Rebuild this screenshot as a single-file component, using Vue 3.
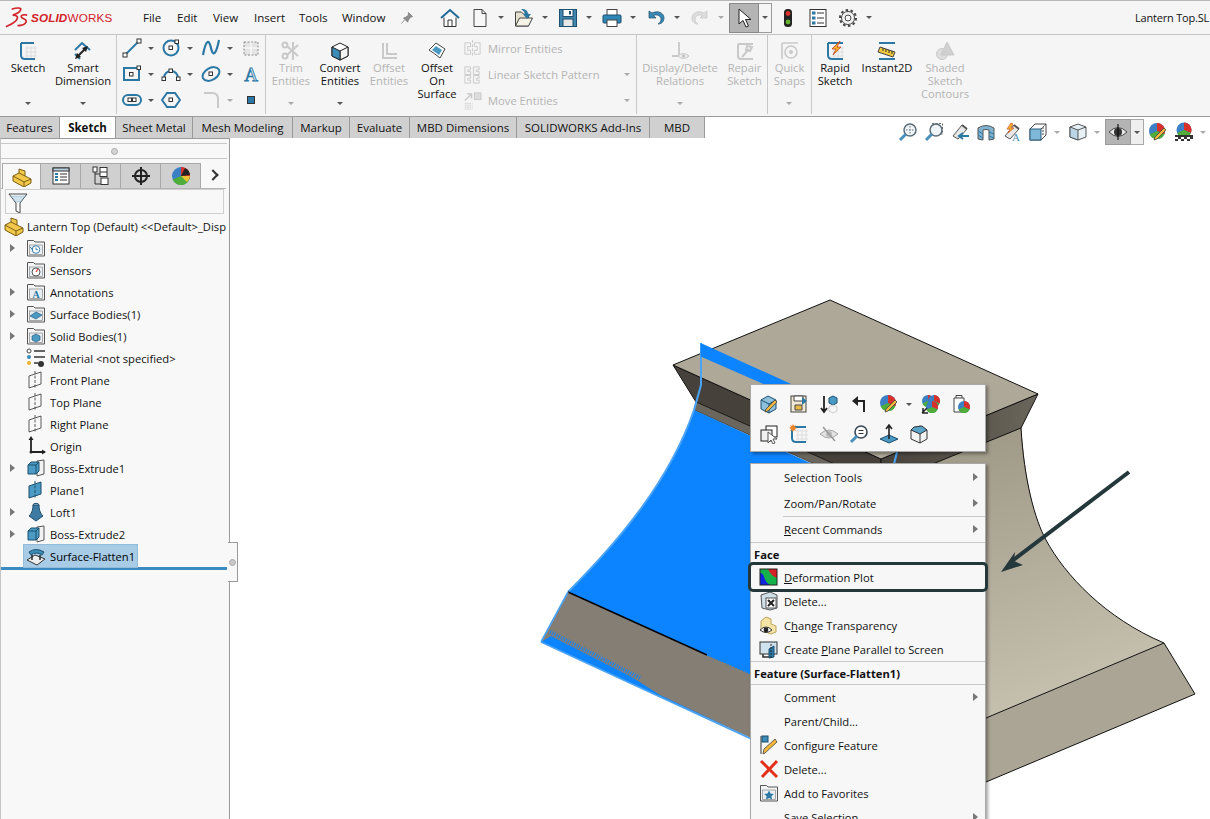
<template>
  <div class="app">
    <!-- title bar -->
    <header class="topbar">
      <div class="logo">
        <svg class="logo-mark" viewBox="0 0 26 22"><path d="M7 2C12 0 18 0 16 3 15 6 11 7 8 8 13 8 14 10 12 13 10 16 5 18 1 20" fill="none" stroke="#d3222a" stroke-width="1.7"/><path d="M23 8c-3-1-7 0-6 2 1 2 6 2 5 5-1 3-5 4-9 4" fill="none" stroke="#d3222a" stroke-width="1.7"/></svg>
        <span class="logo-text"><b>SOLID</b>WORKS</span>
      </div>
      <nav class="menus">
        <span v-for="m in menus" :key="m">{{ m }}</span>
      </nav>
      <svg class="ico pin" viewBox="0 0 20 20" v-html="icons.pin"></svg>
      <div class="quick">
        <template v-for="q in quick" :key="q.i">
          <span v-if="q.select" class="select-btn"><svg class="ico" viewBox="0 0 20 20" v-html="icons[q.i]"></svg></span>
          <span v-else class="q-slot" :class="{ solo: !q.caret }"><svg class="ico" viewBox="0 0 20 20" v-html="icons[q.i]"></svg></span>
          <span v-if="q.caret" class="q-caret" :class="{ boxed: q.select }"><i class="caret" :class="{ off: q.off }"></i></span>
        </template>
      </div>
      <div class="doc-title">Lantern Top.SL</div>
    </header>

    <!-- command manager -->
    <section class="ribbon">
      <div v-for="g in groups" :key="g.cls" class="group" :class="g.cls">
        <div v-if="g.tools" class="tool-grid">
          <div v-for="t in g.tools" :key="t.i" class="tool-cell">
            <svg class="ico wide" viewBox="0 0 20 20" v-html="icons[t.i]"></svg>
            <i v-if="t.caret" class="caret" :class="{ off: t.off }"></i>
          </div>
        </div>
        <div v-for="b in g.btns" :key="b.i" class="r-btn" :class="{ off: b.off }" :style="{ width: b.w + 'px' }">
          <svg class="ico" viewBox="0 0 20 20" v-html="icons[b.i]"></svg>
          <div v-for="l in b.label" :key="l">{{ l }}</div>
          <i v-if="b.caret" class="caret r-caret" :class="{ off: b.off }"></i>
        </div>
        <div v-if="g.stack" class="stack">
          <div v-for="s in g.stack" :key="s.label" class="stack-row">
            <svg class="ico small" viewBox="0 0 20 20" v-html="icons[s.i]"></svg>
            <span>{{ s.label }}</span>
            <i v-if="s.caret" class="caret off"></i>
          </div>
        </div>
      </div>
    </section>

    <div class="tabs">
      <span v-for="t in tabs" :key="t.label" class="tab" :class="{ active: t.active }" :style="{ width: t.w + 'px' }">{{ t.label }}</span>
    </div>

    <div class="main">
      <aside class="side">
        <div class="grip"><i></i></div>
        <div class="side-tabs">
          <span v-for="(t, n) in sideTabs" :key="t" class="side-tab" :class="{ active: n === 0 }">
            <svg class="ico" viewBox="0 0 20 20" v-html="icons[t]"></svg>
          </span>
          <span class="side-more"></span>
        </div>
        <div class="filter"><svg class="ico" viewBox="0 0 20 20" v-html="icons.funnel"></svg></div>
        <div class="tree-root">
          <svg class="ico" viewBox="0 0 20 20" v-html="icons.part"></svg>
          <span class="root-label">Lantern Top (Default) &lt;&lt;Default&gt;_Disp</span>
        </div>
        <div v-for="r in tree" :key="r.label" class="tree-row">
          <span class="twist"><i v-if="r.open" class="tri"></i></span>
          <span class="tree-cell" :class="{ sel: r.sel }">
            <svg class="ico" viewBox="0 0 20 20" v-html="icons[r.i]"></svg>
            <span>{{ r.label }}</span>
          </span>
        </div>
        <div class="rollback"></div>
        <div class="sash"><i></i></div>
      </aside>

      <main class="viewport">
        <svg class="model" viewBox="230 138 980 681">
          <defs>
            <linearGradient id="body" x1="0" y1="0" x2="0.3" y2="1">
              <stop offset="0" stop-color="#98917f" />
              <stop offset="0.55" stop-color="#b4ae9d" />
              <stop offset="1" stop-color="#cbc5b4" />
            </linearGradient>
            <linearGradient id="neck" x1="0" y1="0" x2="1" y2="0">
              <stop offset="0" stop-color="#46423b" />
              <stop offset="1" stop-color="#6a665b" />
            </linearGradient>
          </defs>
          <!-- right body and lower flange -->
          <path d="M881 470 1021 420C1024 480 1035 520 1046 540 1065 575 1105 618 1164 643L986 718 850 780Z" fill="url(#body)" />
          <path d="M1021 428C1024 480 1035 520 1046 540 1065 575 1105 618 1164 643" fill="none" stroke="#111" stroke-width="1" />
          <path d="M1164 643 1195 694 986 782 880 830V770L986 718Z" fill="#aba596" stroke="#111" stroke-width="1" />
          <!-- top block -->
          <path d="M673 365 881 459 881 485 696 402Z" fill="#46423b" stroke="#111" />
          <path d="M1038 394 881 459 881 485 1021 428Z" fill="url(#neck)" stroke="#111" />
          <path d="M696 402 881 485 881 494 694 410Z" fill="#6c675e" stroke="#111" stroke-width="0.6" />
          <path d="M830 300 1038 394 881 459 673 365Z" fill="#aea898" stroke="#111" />
          <!-- selected face -->
          <path d="M694 410 830 472 900 472 790 720 568 592C620 540 670 480 694 410Z" fill="#0d84ff" />
          <path d="M568 592C620 540 670 480 694 410L701 385V343" fill="none" stroke="#4aa3f5" stroke-width="2" />
          <path d="M700.7 343 800 388 800 400 700.7 356.5Z" fill="#0d84ff" />
          <path d="M897 452 894 464" stroke="#4aa3f5" stroke-width="2" />
          <!-- lower left flange -->
          <path d="M568 592 707 655 760 678 760 742 541 642Z" fill="#847e74" />
          <path d="M568 592 707 655" stroke="#000" stroke-width="1.5" />
          <path d="M707 655 760 678" stroke="#0d84ff" stroke-width="1.5" stroke-dasharray="1.5 1.5" />
          <path d="M541 642 551 636 630 676 660 695 760 742Z" fill="#0d84ff" />
          <path d="M550 632 640 678" fill="none" stroke="#0d84ff" stroke-width="4" stroke-dasharray="1 1.5" />
          <path d="M541 642 568 592M541 642 760 743" fill="none" stroke="#4aa3f5" stroke-width="1.6" />
          <!-- callout arrow -->
          <path d="M1129 472 1012 561" stroke="#24383c" stroke-width="4" />
          <path d="M1001 572 1015 552 1014 561 1023 565Z" fill="#24383c" />
        </svg>

        <div class="mini">
          <div v-for="(row, n) in miniBar" :key="n" class="mini-row">
            <template v-for="m in row" :key="m">
              <i v-if="m === 'caret'" class="caret mini-caret"></i>
              <span v-else class="mini-btn"><svg class="ico" viewBox="0 0 20 20" v-html="icons[m]"></svg></span>
            </template>
          </div>
        </div>

        <div class="ctx">
          <template v-for="(it, n) in ctxItems" :key="n">
            <div v-if="it.sep" class="ctx-sep"></div>
            <div v-else-if="it.head" class="ctx-head">{{ it.head }}</div>
            <div v-else class="ctx-row" :class="{ tall: it.tall, inset: it.inset, hl: it.hl }">
              <svg v-if="it.i" class="ico" viewBox="0 0 20 20" v-html="icons[it.i]"></svg>
              <span v-else></span>
              <span>{{ it.a }}<u v-if="it.u">{{ it.u }}</u>{{ it.b }}</span>
              <i v-if="it.sub" class="tri"></i>
            </div>
          </template>
        </div>
      </main>
    </div>

    <div class="viewbar">
      <template v-for="v in viewBar" :key="v.i">
        <span class="v-slot" :class="{ on: v.on }"><svg class="ico" viewBox="0 0 20 20" v-html="icons[v.i]"></svg></span>
        <span v-if="v.caret" class="v-caret" :class="{ boxed: v.on }"><i class="caret" :class="{ off: !v.on }"></i></span>
      </template>
    </div>
  </div>
</template>

<script setup>
const BL = '#2b78a5'
const DK = '#333'
const OFF = '#c9c9c9'

const sq = (x, y, s = 4) => `<rect x="${x}" y="${y}" width="${s}" height="${s}" fill="#fff" stroke="${DK}"/>`
const ball = (x, y, r) => `<g transform="translate(${x} ${y}) scale(${r / 10})"><circle r="10" fill="#3b7fc4"/><path d="M0 0V-10A10 10 0 0 1 9.2 4Z" fill="#d8312a"/><path d="M0 0L9.2 4A10 10 0 0 1-9.2 4Z" fill="#4fae3a"/></g>`
const pencil = '<path d="M9 17 18 8l-2-2-9 9-1 3Z" fill="#f3b73c" stroke="#444" stroke-width=".8"/>'
const folder = inner => `<path d="M1.5 4V2.5h6L9 4h9.5v14h-17Z" fill="#f4f4f4" stroke="#555"/><rect x="3.5" y="7" width="13" height="9.5" fill="#e9eef2" stroke="#777" stroke-width=".6"/>${inner}`
const plane = '<path d="M3 6 15 2V14L3 18Z" fill="none" stroke="#333" stroke-width=".8"/><path d="M9 1V19" stroke="#333" stroke-width=".8" stroke-dasharray="3 1.5"/>'
const block = '<path d="M11 3 18 2V16L11 18Z" fill="#f2f2f2" stroke="#555"/><path d="M2 7l3-3h8v9l-3 3H2Z" fill="#4a9ac4" stroke="#1d4f6e"/><path d="M2 7h8v9M10 7l3-3" fill="none" stroke="#1d4f6e"/>'
const yellowPart = '<path d="M1 9 7 6V2l6 2v5l6 3v4l-7 4L1 14Z" fill="#f2c84b" stroke="#7a5f12"/><path d="M1 9l11 6 7-3M12 15v5M7 6l6 3" fill="none" stroke="#7a5f12"/>'
const flash = '<path d="M3 14 12 3l5 4-9 10Z" fill="#e8e8e8" stroke="#555"/><path d="M12 3l5 4" stroke="#555" stroke-width="2"/>'
const glass = '<circle cx="12" cy="8" r="6" fill="#eef4f8" stroke="#5a6b78" stroke-width="1.5"/><path d="M8 12 2 18" stroke="#4a90b8" stroke-width="3"/>'

const icons = {
  pin: '<path d="M12 2l6 6-3 1-3 4-1 3-6-6 3-1 4-3ZM7 12l-5 6" fill="#8e8e8e" stroke="#777"/>',
  home: `<path d="M1 10 10 2l9 8" fill="none" stroke="#1f6a96" stroke-width="2"/><path d="M4 9.5V18.5H16V9.5" fill="#fff" stroke="${DK}"/><path d="M8 18.5V12H12V18.5" fill="none" stroke="${DK}"/>`,
  doc: `<path d="M4 1.5h8l4 4v13H4Z" fill="#f7f7f7" stroke="#444"/><path d="M12 1.5v4h4" fill="none" stroke="#444"/>`,
  open: `<path d="M1.5 4h6l2 2h5v12h-13Z" fill="#e6e1cf" stroke="#444"/><path d="M1.5 18l4-8h13l-4 8Z" fill="#f5f2e6" stroke="#444"/><path d="M7 1c5 0 7 2 7 5h3l-4 5-4-5h2c0-2-2-3-4-5Z" fill="${BL}"/>`,
  save: `<rect x="1.5" y="1.5" width="17" height="17" fill="#3f87ad" stroke="#1d4f6e"/><rect x="5" y="1.5" width="10" height="7" fill="#fff" stroke="#1d4f6e"/><rect x="5" y="11" width="10" height="7.5" fill="#e8e8e8" stroke="#1d4f6e"/><rect x="11" y="3" width="2" height="3.5" fill="#1d4f6e"/>`,
  print: `<rect x="5" y="1.5" width="10" height="6" fill="#fff" stroke="#444"/><rect x="1" y="7" width="18" height="8" rx="1" fill="#2f86b5" stroke="#1d4f6e"/><rect x="5" y="12" width="10" height="6.5" fill="#fff" stroke="#444"/>`,
  undo: `<path d="M3 3V10H10L7.5 7.5C11 6 15 8 15 11c0 2-1 4-3 5 4 0 6-3 6-6 0-5-6-8-12-5Z" fill="#3a88b4" stroke="#1d4f6e" stroke-width=".7"/>`,
  redo: `<path d="M17 3V10H10L12.5 7.5C9 6 5 8 5 11c0 2 1 4 3 5-4 0-6-3-6-6 0-5 6-8 12-5Z" fill="#ddd" stroke="#c4c4c4" stroke-width=".7"/>`,
  arrow: '<path d="M5 1V16L9 12.5 12 19 14.5 18 11.5 11.5H17Z" fill="#fff" stroke="#222"/>',
  traffic: '<rect x="6" y="1" width="8" height="18" rx="3.5" fill="#222"/><circle cx="10" cy="5.5" r="2.4" fill="#d8322a"/><circle cx="10" cy="14" r="2.4" fill="#65b32e"/>',
  options: `<rect x="2" y="1.5" width="16" height="17" fill="#fff" stroke="${DK}"/><path d="M9 5h7M9 10h7M9 15h7" stroke="${DK}"/><rect x="4" y="3.5" width="3.5" height="3" fill="${BL}"/><rect x="4" y="8.5" width="3.5" height="3" fill="${BL}"/><rect x="4" y="13.5" width="3.5" height="3" fill="${BL}"/>`,
  gear: `<circle cx="10" cy="10" r="3" fill="none" stroke="#444"/><circle cx="10" cy="10" r="6.5" fill="none" stroke="#444"/><circle cx="10" cy="10" r="8" fill="none" stroke="#444" stroke-width="2" stroke-dasharray="2.6 2.4"/>`,

  sketch: `<path d="M7 7h12M7 11h12M7 15h12M9 5v13M13 5v13M17 5v13" stroke="#ddd"/><path d="M3 2H16M3 2V14Q3 18 7 18H17" fill="none" stroke="${BL}" stroke-width="2"/>`,
  smart: `<path d="M2 9 9 2l8 7M2 13l5 5" fill="none" stroke="${BL}" stroke-width="2"/><path d="M4 16 13 7" stroke="#222" stroke-width="2"/><path d="M2 18l2-6 4 4ZM15 5l-6 2 4 4Z" fill="#222"/>`,
  line: `<path d="M3 17 17 3" stroke="${BL}" stroke-width="1.8"/>${sq(1, 15)}${sq(15, 1)}`,
  circle: `<circle cx="10" cy="10" r="7.5" fill="none" stroke="${BL}" stroke-width="2"/>${sq(8, 8, 3.5)}${sq(14, 2, 3.5)}`,
  spline: `<path d="M2 17C5 1 8 1 10 10s5 7 8-8" fill="none" stroke="${BL}" stroke-width="2.2"/>`,
  pattern: `<rect x="3" y="4" width="14" height="13" fill="#e4e4e4" stroke="#888" stroke-dasharray="2 1.5"/><path d="M3 10h14M10 4v13" stroke="#fff"/>`,
  rect: `<rect x="2" y="4" width="15" height="12" fill="none" stroke="${BL}" stroke-width="2"/>${sq(7.5, 8.5, 3.5)}${sq(15, 2, 3.5)}`,
  arc: `<path d="M3 14a7 7 0 0 1 14 0" fill="none" stroke="${BL}" stroke-width="2"/>${sq(1, 13, 3.5)}${sq(8, 5, 3.5)}${sq(15.5, 13, 3.5)}`,
  ellipse: `<ellipse cx="10" cy="10" rx="9" ry="6" transform="rotate(-30 10 10)" fill="none" stroke="${BL}" stroke-width="2"/>${sq(8, 8, 3.5)}`,
  textA: `<text x="10" y="17" font-size="19" font-family="Liberation Serif" text-anchor="middle" fill="#fff" stroke="${BL}" stroke-width=".9">A</text>`,
  slot: `<rect x="1" y="5" width="18" height="10" rx="5" fill="none" stroke="${BL}" stroke-width="2"/>${sq(6, 8, 3.5)}${sq(10.5, 8, 3.5)}`,
  hexa: `<path d="M6 3h8l5 7-5 7H6l-5-7Z" fill="none" stroke="${BL}" stroke-width="2"/>${sq(8, 8, 3.5)}`,
  fillet: `<path d="M3 3h8q6 0 6 6v9" fill="none" stroke="${OFF}" stroke-width="2"/>`,
  point: `<rect x="6.5" y="6.5" width="7" height="7" fill="${BL}" stroke="${DK}"/>`,
  trim: `<circle cx="4" cy="4" r="2.5" fill="none" stroke="${OFF}" stroke-width="2"/><circle cx="4" cy="15" r="2.5" fill="none" stroke="${OFF}" stroke-width="2"/><path d="M6 5 17 15M6 14 17 4M12 1V19" stroke="${OFF}" stroke-width="2"/>`,
  convert: `<path d="M2 6 10 2l8 4v9l-8 4-8-4Z" fill="#fff" stroke="#222"/><path d="M10 10v9l8-4V6Z" fill="#f3f3f3" stroke="#222"/><path d="M2 6l8 4v9l-8-4Z" fill="#3d8cb8" stroke="#222"/>`,
  offset: `<path d="M4 2V17H18M8 2V13H18" fill="none" stroke="${OFF}" stroke-width="2"/>`,
  offsetSurf: `<path d="M2 9 9 2l9 6-5 9Q7 12 2 9Z" fill="#fff" stroke="#444"/><path d="M5 9 9 5l6 4-3 5Q8 11 5 9Z" fill="#4a9ac4"/>`,
  mirror: `<path d="M10 1V19" stroke="${OFF}" stroke-dasharray="3 1.5"/><path d="M8 4H2V16H8V12H5V8H8ZM12 4h6V16H12V12h3V8H12Z" fill="none" stroke="${OFF}"/>`,
  linear: `<path d="M2 2h6v3h-3v2h3v3H2ZM11 2h6v3h-3v2h3v3H11ZM2 11h6v3h-3v2h3v3H2ZM11 11h6v3h-3v2h3v3H11Z" fill="none" stroke="${OFF}"/>`,
  move: `<path d="M2 10 8 4M4 3h5v5" fill="none" stroke="${OFF}" stroke-width="1.5"/><rect x="12" y="2" width="7" height="7" fill="#ddd" stroke="${OFF}"/><path d="M2 13h8M2 15h8M2 17h8M2 19h8" stroke="${OFF}" stroke-dasharray="1.5 1"/>`,
  relations: `<path d="M9 1V14M2 15H16" stroke="${OFF}" stroke-width="1.8"/><path d="M8 15q5-5 11 0q-6 5-11 0Z" fill="#eee" stroke="${OFF}"/><circle cx="13.5" cy="15" r="1.8" fill="${OFF}"/>`,
  repair: `<path d="M3 3H18M3 3V15Q3 18 6 18H18" fill="none" stroke="${OFF}" stroke-width="2"/><path d="M7 16 14 8M12 5l5 1-2 4-4-1Z" stroke="${OFF}" stroke-width="2" fill="none"/>`,
  snaps: `<path d="M2 2H18M2 2V18" stroke="${OFF}" stroke-width="1.6"/><circle cx="11" cy="11" r="6" fill="none" stroke="${OFF}" stroke-width="1.6"/><circle cx="11" cy="11" r="2" fill="${OFF}"/>`,
  rapid: `<path d="M7 7h12M7 11h12M7 15h12M9 5v13M13 5v13M17 5v13" stroke="#ddd"/><path d="M3 2H18M3 2V14Q3 18 7 18H18" fill="none" stroke="${BL}" stroke-width="2"/><path d="M15 0 7 8h4l-3 6 8-8h-4Z" fill="#f0b32b" stroke="#c8431c" stroke-width=".8"/>`,
  instant: `<path d="M2 2H18M2 18H18" stroke="${BL}" stroke-width="2"/><path d="M3 6 18 11 16 16 1 11Z" fill="#efc83c" stroke="#444"/><path d="M6 7v3M9 8v3M12 9v3M15 10v3" stroke="#333"/>`,
  shaded: `<circle cx="7" cy="13" r="5.5" fill="#ddd" stroke="${OFF}"/><path d="M12 1 19 14H6Z" fill="#d0d0d0" stroke="${OFF}"/>`,

  zoomfit: `${glass}<path d="M12 4v8M8 8h8" stroke="#5a6b78" stroke-width=".9" stroke-dasharray="1.5 1.5"/>`,
  zoomarea: `<rect x="8" y="1.5" width="10.5" height="10.5" fill="none" stroke="#666" stroke-dasharray="2 1.5"/>${glass}`,
  prevview: `${flash}<path d="M19 14H10M13 11l-4 3 4 3" fill="none" stroke="${BL}" stroke-width="2"/>`,
  section: `<path d="M2 6q8-5 16 0v11l-5 1V8q-3-1-6 0v10l-5-1Z" fill="#7eb2d0" stroke="#555"/><path d="M2 9l5 3M2 13l5 3M13 10l5 2M13 14l5 2" stroke="#2b78a5"/>`,
  dynamic: `${flash}<path d="M9 1 5 7h3L6 11l6-5H9l2-4Z" fill="#f0b32b" stroke="#c8431c" stroke-width=".6"/><text x="14" y="19" font-size="11" font-family="Liberation Serif" fill="#4a8fb8" text-anchor="middle">A</text>`,
  cubeview: `<path d="M2 7 7 2H18V13L13 18H2Z" fill="#fff" stroke="#444"/><rect x="2" y="7" width="11" height="11" fill="#7fb8d8" stroke="#2b5f80"/><path d="M13 7l5-5M15 5v8" stroke="#444" stroke-dasharray="2 1"/>`,
  display: `<path d="M10 2 18 5V15L10 18 2 15V5Z" fill="#e8f1f6" stroke="#555"/><path d="M2 5 10 8V18L2 15Z" fill="#b9d5e6" stroke="#555"/><path d="M10 8 18 5" stroke="#555"/>`,
  eye: '<path d="M1 10q9-9 18 0q-9 9-18 0Z" fill="#e8e8e8" stroke="#444"/><circle cx="10" cy="10" r="4" fill="#333"/><path d="M10 2V18" stroke="#111" stroke-width="1.2"/>',
  appear: `${ball(9, 9, 8)}${pencil}`,
  scene: `${ball(10, 8, 7.5)}<path d="M1 13h18v6H1Z" fill="#333"/><path d="M1 15h3v2H1ZM7 15h3v2H7ZM13 15h3v2h-3ZM4 17h3v2H4ZM10 17h3v2h-3ZM16 17h3v2h-3Z" fill="#fff"/>`,

  part: yellowPart,
  props: `<rect x="2" y="2" width="16" height="16" fill="#fff" stroke="${DK}"/><rect x="2" y="2" width="16" height="3" fill="#bcd4e2" stroke="${DK}"/><path d="M9 8h7M9 11h7M9 14h7" stroke="${DK}"/><rect x="4" y="7" width="3" height="2" fill="${BL}"/><rect x="4" y="10" width="3" height="2" fill="${BL}"/><rect x="4" y="13" width="3" height="2" fill="${BL}"/>`,
  config: `<path d="M4 4v14h6M4 8h6" stroke="${DK}" fill="none"/><rect x="2" y="1" width="4" height="5" fill="#fff" stroke="${DK}"/><rect x="9" y="1.5" width="7" height="9" fill="#fff" stroke="${DK}"/><path d="M9 6h7" stroke="${DK}"/><rect x="10" y="12" width="7" height="6.5" fill="#fff" stroke="${DK}"/>`,
  target: '<circle cx="10" cy="10" r="6" fill="none" stroke="#222" stroke-width="2"/><path d="M10 1V19M1 10H19" stroke="#222" stroke-width="2"/>',
  appearTab: `${ball(10, 10, 9)}<path d="M10 10 14 2A9 9 0 0 1 19 9Z" fill="#222"/><path d="M10 10 19 10A9 9 0 0 1 16 16Z" fill="#eac234"/>`,
  funnel: '<path d="M1 1H19L12 10V20L8 18V10Z" fill="#fff" stroke="#444"/><path d="M3 3H17L12 9H8Z" fill="#cfe2ee" stroke="#7aa6c2" stroke-width=".5"/>',
  fFolder: folder('<circle cx="10" cy="11.5" r="3.8" fill="#fff" stroke="#3d7fa8"/><path d="M10 9.5v2.2h2M4 9l3 3" stroke="#3d7fa8" fill="none"/>'),
  fSensor: folder('<circle cx="10" cy="12" r="4" fill="#fff" stroke="#555"/><path d="M10 12l2-3" stroke="#d8322a" stroke-width="1.3"/>'),
  fAnno: folder(`<text x="10" y="16" font-size="10" font-weight="700" font-family="Liberation Serif" text-anchor="middle" fill="#2b78a5">A</text>`),
  fSurf: folder('<path d="M4 12 10 8l6 3-6 4Z" fill="#4a9ac4" stroke="#1d4f6e" stroke-width=".6"/>'),
  fSolid: folder('<path d="M10 8l4 2v4l-4 2-4-2v-4Z" fill="#4a9ac4" stroke="#1d4f6e" stroke-width=".6"/>'),
  material: `<path d="M8 3H19M8 9H19" stroke="${DK}" stroke-width="1.5"/><circle cx="3" cy="3" r="2" fill="#fff" stroke="#444"/><circle cx="3" cy="9" r="2" fill="#3d8cb8"/><circle cx="3" cy="15" r="2" fill="#e8b22c"/><circle cx="15" cy="16" r="3" fill="#333"/><path d="M8 15h4" stroke="${DK}" stroke-width="1.5"/>`,
  plane,
  origin: '<path d="M5 2V16H19" fill="none" stroke="#222" stroke-width="1.8"/><path d="M5 0 2.5 4H7.5ZM20 16l-4-2.5v5Z" fill="#222"/><circle cx="5" cy="16" r="1.5" fill="#222"/>',
  extrude: block,
  planeF: '<path d="M3 6 15 2V14L3 18Z" fill="#4a9ac4" stroke="#1d4f6e"/><path d="M9 1V19" stroke="#1d4f6e" stroke-dasharray="3 1.5"/>',
  loft: '<ellipse cx="10" cy="3" rx="3" ry="1.6" fill="#d9e7ef" stroke="#1d4f6e"/><path d="M7 3C7 9 5 12 3 14L10 19l7-5C15 12 13 9 13 3Z" fill="#3e7ba3" stroke="#1d4f6e"/>',
  flatten: '<path d="M1 14 9 9l10 4-8 6Z" fill="#eee" stroke="#333"/><path d="M3 6Q10 1 18 6L16 9Q10 5 5 9Z" fill="#3d8cb8" stroke="#1d4f6e"/><path d="M6 9v5M14 9v5" stroke="#222" stroke-width="1.4"/>',

  editPart: `<path d="M2 6 9 2l8 4v9l-7 4-8-4Z" fill="#8ec0dc" stroke="#1d4f6e"/><path d="M2 6l8 4v9M10 10l7-4" fill="none" stroke="#1d4f6e"/><path d="M9 17 18 8l-2-2-9 9-1 3Z" fill="#f3b73c" stroke="#444" stroke-width=".8"/>`,
  editSketch: `<rect x="2" y="2" width="15" height="16" fill="#efe8d2" stroke="#444"/><path d="M5 2h9v5H5Z" fill="#fff" stroke="#444"/><path d="M6 11h7v5H6Z" fill="#e8b84a" stroke="#444"/><path d="M13 3l5 4-5 4Z" fill="${BL}"/>`,
  rollback: `<path d="M5 2V17M2 14l3 4 3-4" fill="none" stroke="#222" stroke-width="1.8"/><path d="M10 4l4-2 4 2v5l-4 2-4-2Z" fill="#4a9ac4" stroke="#1d4f6e"/><path d="M10 13l4-2 4 2v4l-4 2-4-2Z" fill="#f6f6f6" stroke="#ccc"/>`,
  parentUp: '<path d="M15 18V7H8" fill="none" stroke="#222" stroke-width="2"/><path d="M3 7l6-5v10Z" fill="#222"/>',
  copyApp: `${ball(7, 7, 6)}${ball(13, 7, 6)}${ball(11, 13, 6)}<path d="M1 19 6 14M2 14v5h5" fill="none" stroke="#222" stroke-width="1.5"/>`,
  docBall: `<path d="M3 4h10v14H3Z" fill="#fff" stroke="#444"/><path d="M5 4V1.5h6V4" fill="none" stroke="#444"/>${ball(13, 13, 6)}`,
  selOther: `<rect x="7" y="2" width="11" height="11" fill="#fff" stroke="#222"/><rect x="2" y="6" width="11" height="11" fill="#f0f0f0" stroke="#222"/><path d="M9 8V19L12 16 14 20 16 19 14 15H18Z" fill="#fff" stroke="#555"/>`,
  newSketch: `<path d="M7 7h12M7 11h12M7 15h12M9 5v13M13 5v13M17 5v13" stroke="#ddd"/><path d="M3 3V14Q3 18 7 18H17M3 3H17" fill="none" stroke="${BL}" stroke-width="2"/><path d="M4 0l1 2 2-1-1 2 2 1-2 1 1 2-2-1-1 2-1-2-2 1 1-2-2-1 2-1-1-2 2 1Z" fill="#e8832a"/>`,
  hide: '<path d="M1 10q9-8 18 0q-9 8-18 0Z" fill="#e2e2e2" stroke="#a8a8a8"/><circle cx="10" cy="10" r="3" fill="#bbb"/><path d="M4 3 16 17" stroke="#999" stroke-width="1.5"/>',
  zoomSel: `<circle cx="12" cy="8" r="6" fill="#fff" stroke="#3a4a55" stroke-width="1.6"/><path d="M9.5 6.5h5M9.5 9.5h5" stroke="#333"/><path d="M8 12 2 18" stroke="#4a90b8" stroke-width="3"/>`,
  normal: '<path d="M1 15 10 11l9 4-9 4Z" fill="#4a9ac4" stroke="#1d4f6e"/><path d="M10 15V2M7 5l3-4 3 4" fill="none" stroke="#222" stroke-width="1.6"/>',
  isoCube: '<path d="M2 6 11 2l7 4v9l-7 4-9-4Z" fill="#f3f3f3" stroke="#333"/><path d="M2 6l3-3 8-1 5 4-7 4Z" fill="#5aa3c9" stroke="#333"/><path d="M11 10v9" stroke="#333"/>',

  deform: '<rect x="1" y="2" width="17" height="16" fill="#16b14b"/><path d="M1 6Q4 6 5 10 7 16 11 18H1Z" fill="#1024e0"/><path d="M9 2H18V11Q12 9 9 2Z" fill="#d91f26"/><rect x="1" y="2" width="17" height="16" fill="none" stroke="#222"/>',
  delFace: '<path d="M2 4 11 1l7 3v13l-7 2-8-2Z" fill="#cfdfe8" stroke="#555"/><rect x="7" y="7" width="10" height="10" fill="#fff" stroke="#555"/><path d="M9 9l6 6M15 9l-6 6" stroke="#222" stroke-width="2"/>',
  transp: '<path d="M7 2l5 2v5l5 2v6l-5 2-5-2-5-3V6Z" fill="#f5e3a6" stroke="#bba45a"/><path d="M1 15q6-6 12 0q-6 5-12 0Z" fill="#fff" stroke="#333"/><circle cx="7" cy="15" r="2.4" fill="#222"/>',
  parallel: `<rect x="1" y="3" width="17" height="12" fill="#cfe3ef" stroke="#333"/><path d="M4 15v3h7" stroke="#333" fill="none" stroke-width="1.6"/><path d="M10 10 15 7V18L10 19Z" fill="${BL}" stroke="#1d4f6e"/><path d="M12 5V19" stroke="#222" stroke-dasharray="2 1"/>`,
  configure: `<path d="M2 1V19" stroke="#333"/><rect x="3" y="1" width="6" height="6" fill="#3d8cb8" stroke="#1d4f6e"/><path d="M6 18 18 7l-2-3L5 14l-1 5Z" fill="#f3b73c" stroke="#444" stroke-width=".8"/>`,
  redX: '<path d="M2 2 18 18M18 2 3 18" stroke="#e2301b" stroke-width="3"/>',
  fav: folder('<path d="M10 7.5l1.5 3 3.3.4-2.4 2.3.6 3.3-3-1.6-3 1.6.6-3.3-2.4-2.3 3.3-.4Z" fill="#2b78a5"/>')
}

const menus = ['File', 'Edit', 'View', 'Insert', 'Tools', 'Window']

const quick = [
  { i: 'home' },
  { i: 'doc', caret: true },
  { i: 'open', caret: true },
  { i: 'save', caret: true },
  { i: 'print', caret: true },
  { i: 'undo', caret: true },
  { i: 'redo', caret: true, off: true },
  { i: 'arrow', caret: true, select: true },
  { i: 'traffic' },
  { i: 'options' },
  { i: 'gear', caret: true }
]

const groups = [
  {
    cls: 'g1',
    btns: [
      { i: 'sketch', label: ['Sketch'], w: 56, caret: true },
      { i: 'smart', label: ['Smart', 'Dimension'], w: 54, caret: true }
    ]
  },
  {
    cls: 'g2',
    tools: [
      { i: 'line', caret: true }, { i: 'circle', caret: true }, { i: 'spline', caret: true }, { i: 'pattern' },
      { i: 'rect', caret: true }, { i: 'arc', caret: true }, { i: 'ellipse', caret: true }, { i: 'textA' },
      { i: 'slot', caret: true }, { i: 'hexa' }, { i: 'fillet', caret: true, off: true }, { i: 'point' }
    ]
  },
  {
    cls: 'g3',
    btns: [
      { i: 'trim', label: ['Trim', 'Entities'], w: 48, off: true, caret: true },
      { i: 'convert', label: ['Convert', 'Entities'], w: 50, caret: true },
      { i: 'offset', label: ['Offset', 'Entities'], w: 48, off: true },
      { i: 'offsetSurf', label: ['Offset', 'On', 'Surface'], w: 48 }
    ],
    stack: [
      { i: 'mirror', label: 'Mirror Entities' },
      { i: 'linear', label: 'Linear Sketch Pattern', caret: true },
      { i: 'move', label: 'Move Entities', caret: true }
    ]
  },
  {
    cls: 'g4',
    btns: [
      { i: 'relations', label: ['Display/Delete', 'Relations'], w: 86, off: true, caret: true },
      { i: 'repair', label: ['Repair', 'Sketch'], w: 43, off: true }
    ]
  },
  { cls: 'g5', btns: [{ i: 'snaps', label: ['Quick', 'Snaps'], w: 43, off: true, caret: true }] },
  {
    cls: 'g6',
    btns: [
      { i: 'rapid', label: ['Rapid', 'Sketch'], w: 46 },
      { i: 'instant', label: ['Instant2D'], w: 58 },
      { i: 'shaded', label: ['Shaded', 'Sketch', 'Contours'], w: 58, off: true }
    ]
  }
]

const tabs = [
  { label: 'Features', w: 60 },
  { label: 'Sketch', w: 57, active: true },
  { label: 'Sheet Metal', w: 77 },
  { label: 'Mesh Modeling', w: 100 },
  { label: 'Markup', w: 57 },
  { label: 'Evaluate', w: 60 },
  { label: 'MBD Dimensions', w: 107 },
  { label: 'SOLIDWORKS Add-Ins', w: 133 },
  { label: 'MBD', w: 55 }
]

const sideTabs = ['part', 'props', 'config', 'target', 'appearTab']

const tree = [
  { label: 'Folder', i: 'fFolder', open: true },
  { label: 'Sensors', i: 'fSensor' },
  { label: 'Annotations', i: 'fAnno', open: true },
  { label: 'Surface Bodies(1)', i: 'fSurf', open: true },
  { label: 'Solid Bodies(1)', i: 'fSolid', open: true },
  { label: 'Material <not specified>', i: 'material' },
  { label: 'Front Plane', i: 'plane' },
  { label: 'Top Plane', i: 'plane' },
  { label: 'Right Plane', i: 'plane' },
  { label: 'Origin', i: 'origin' },
  { label: 'Boss-Extrude1', i: 'extrude', open: true },
  { label: 'Plane1', i: 'planeF' },
  { label: 'Loft1', i: 'loft', open: true },
  { label: 'Boss-Extrude2', i: 'extrude', open: true },
  { label: 'Surface-Flatten1', i: 'flatten', sel: true }
]

const miniBar = [
  ['editPart', 'editSketch', 'rollback', 'parentUp', 'appear', 'caret', 'copyApp', 'docBall'],
  ['selOther', 'newSketch', 'hide', 'zoomSel', 'normal', 'isoCube']
]

const ctxItems = [
  { a: 'Selection Tools', sub: true, tall: true },
  { a: 'Zoom/Pan/Rotate', sub: true, tall: true },
  { a: '', u: 'R', b: 'ecent Commands', sub: true, tall: true, inset: true },
  { sep: true },
  { head: 'Face' },
  { a: '', u: 'D', b: 'eformation Plot', i: 'deform', hl: true },
  { a: 'Delete...', i: 'delFace' },
  { a: 'C', u: 'h', b: 'ange Transparency', i: 'transp' },
  { a: 'Create ', u: 'P', b: 'lane Parallel to Screen', i: 'parallel' },
  { sep: true },
  { head: 'Feature (Surface-Flatten1)' },
  { sep: true },
  { a: 'Comment', sub: true },
  { a: 'Parent/Child...' },
  { a: 'Configure Feature', i: 'configure' },
  { a: 'Delete...', i: 'redX' },
  { a: 'Add to Favorites', i: 'fav' },
  { a: 'Save Selection', sub: true }
]

const viewBar = [
  { i: 'zoomfit' },
  { i: 'zoomarea' },
  { i: 'prevview' },
  { i: 'section' },
  { i: 'dynamic' },
  { i: 'cubeview', caret: true },
  { i: 'display', caret: true },
  { i: 'eye', caret: true, on: true },
  { i: 'appear' },
  { i: 'scene', caret: true }
]
</script>

<style>
html, body { margin: 0; background: #fff; }
</style>

<style scoped>
.app {
  position: relative;
  display: flex;
  flex-direction: column;
  width: 1210px;
  height: 819px;
  overflow: hidden;
  background: #fff;
  color: #111;
  font-family: "Open Sans", "Liberation Sans", sans-serif;
  font-size: 11.2px;
}

.ico {
  display: block;
  width: 20px;
  height: 20px;
  flex: none;
}

.caret {
  display: block;
  width: 0;
  height: 0;
  border-left: 3.5px solid transparent;
  border-right: 3.5px solid transparent;
  border-top: 3.5px solid #555;
}
.caret.off { border-top-color: #aaa; }

.tri {
  display: block;
  width: 0;
  height: 0;
  border-top: 4px solid transparent;
  border-bottom: 4px solid transparent;
  border-left: 5px solid #777;
}

/* top bar */
.topbar {
  position: relative;
  display: flex;
  align-items: center;
  flex: none;
  height: 35px;
  box-sizing: border-box;
  background: #f5f5f5;
  border-top: 1px solid #b8b8b8;
  border-bottom: 1px solid #c4c4c4;
}
.logo {
  display: flex;
  align-items: center;
  width: 143px;
  padding-left: 5px;
  box-sizing: border-box;
}
.logo-mark { width: 25px; height: 22px; flex: none; }
.logo-text {
  color: #d3222a;
  font-family: "Liberation Sans", sans-serif;
  font-size: 11.7px;
  letter-spacing: 0.15px;
  margin-left: 1px;
}
.logo-text b { font-style: italic; font-weight: 700; }
.menus {
  display: grid;
  grid-template-columns: 34px 36px 41px 45px 43px 58px;
  font-size: 11.5px;
}
.pin { width: 14px; height: 14px; margin-right: 22px; }
.quick { display: flex; align-items: center; height: 32px; }
.q-slot {
  display: flex;
  align-items: center;
  justify-content: center;
  width: 28px;
}
.q-slot.solo { margin-right: 2px; }
.q-caret {
  display: flex;
  justify-content: center;
  width: 14px;
  margin-right: 2px;
}
.select-btn {
  display: flex;
  align-items: center;
  justify-content: center;
  width: 30px;
  height: 30px;
  margin-left: -1px;
  box-sizing: border-box;
  background: #b4b4b4;
  border: 1px solid #8a8a8a;
}
.q-caret.boxed {
  align-items: center;
  width: 13px;
  height: 30px;
  box-sizing: border-box;
  border: 1px solid #9a9a9a;
  border-left: 0;
}
.doc-title {
  position: absolute;
  left: 1135px;
  top: 9px;
  font-size: 11px;
  letter-spacing: -0.2px;
  white-space: nowrap;
}

/* ribbon */
.ribbon {
  display: flex;
  flex: none;
  height: 81px;
  background: #f5f5f5;
}
.group {
  display: flex;
  height: 79px;
  box-sizing: border-box;
  border-right: 1px solid #c8c8c8;
}
.g1 { width: 117px; }
.g2 { width: 149px; padding-left: 3px; }
.g3 { width: 371px; padding-left: 1px; }
.g4 { width: 131px; }
.g5 { width: 44px; }
.g6 { border-right: 0; }

.r-btn {
  position: relative;
  display: flex;
  flex-direction: column;
  align-items: center;
  padding-top: 6px;
  box-sizing: border-box;
  text-align: center;
  line-height: 13px;
  white-space: nowrap;
}
.r-btn.off { color: #b4b4b4; }
.r-caret {
  position: absolute;
  top: 67px;
  left: 50%;
  margin-left: -3.5px;
}

.tool-grid {
  display: grid;
  grid-template-columns: 39px 40px 40px 24px;
  grid-auto-rows: 26px;
}
.tool-cell { display: flex; align-items: center; }
.tool-cell .ico.wide { margin: 0 2px; }
.tool-cell .caret { margin-left: 4px; }

.stack { width: 174px; padding-left: 2px; box-sizing: border-box; }
.stack-row {
  position: relative;
  display: flex;
  align-items: center;
  height: 26px;
  color: #b4b4b4;
}
.ico.small { width: 19px; height: 19px; margin-right: 6px; }
.stack-row .caret { position: absolute; right: 5px; top: 12px; }

/* tabs */
.tabs {
  display: flex;
  flex: none;
  height: 22px;
  box-sizing: border-box;
  border-top: 1px solid #9a9a9a;
  font-size: 11.5px;
}
.tab {
  display: flex;
  align-items: center;
  justify-content: center;
  flex: none;
  box-sizing: border-box;
  background: #d0d0d0;
  border-right: 1px solid #9a9a9a;
  white-space: nowrap;
}
.tab.active {
  background: #fff;
  font-weight: 700;
  border-left: 1px solid #9a9a9a;
  margin-left: -1px;
}

/* feature tree */
.main { display: flex; flex: 1; min-height: 0; }
.side {
  position: relative;
  flex: none;
  width: 230px;
  box-sizing: border-box;
  background: #f8f8f8;
  border-top: 1px solid #9a9a9a;
  border-left: 1px solid #c4c4c4;
  border-right: 1px solid #9a9a9a;
  padding-top: 4px;
}
.grip {
  display: flex;
  align-items: center;
  justify-content: center;
  height: 16px;
  box-sizing: border-box;
  margin-right: 2px;
  border-top: 1px solid #c8c8c8;
  border-bottom: 1px solid #c8c8c8;
}
.grip i {
  width: 5px;
  height: 5px;
  border-radius: 50%;
  background: #d4d4d4;
  border: 1px solid #aaa;
}
.side-tabs {
  display: flex;
  height: 25px;
  margin: 4px 3px 0 0;
  padding-left: 1px;
  border-bottom: 1px solid #b4b4b4;
}
.side-tab {
  display: flex;
  align-items: center;
  justify-content: center;
  width: 40px;
  box-sizing: border-box;
  background: #d0d0d0;
  border: 1px solid #a8a8a8;
  border-left: 0;
  border-bottom: 0;
}
.side-tab.active {
  width: 39px;
  height: 26px;
  background: #f8f8f8;
  border-left: 1px solid #a8a8a8;
}
.side-more {
  position: relative;
  width: 24px;
}
.side-more::after {
  content: "";
  position: absolute;
  left: 8px;
  top: 8px;
  width: 6px;
  height: 6px;
  border-top: 2px solid #333;
  border-right: 2px solid #333;
  transform: rotate(45deg);
}
.filter {
  height: 25px;
  margin: 0 5px 0 4px;
  box-sizing: border-box;
  border: 1px solid #cfcfcf;
  padding: 3px 0 0 2px;
}
.tree-root {
  display: flex;
  align-items: center;
  height: 22px;
  margin: 1px 2px 0 0;
  padding-left: 3px;
  overflow: hidden;
  white-space: nowrap;
}
.root-label { margin-left: 3px; }
.tree-row {
  display: flex;
  align-items: stretch;
  height: 22px;
  white-space: nowrap;
}
.twist {
  display: flex;
  align-items: center;
  flex: none;
  width: 23px;
  padding-left: 9px;
  box-sizing: border-box;
}
.tree-cell {
  display: flex;
  align-items: center;
  gap: 4px;
  padding: 0 2px;
}
.tree-cell.sel {
  background: #a8cbe6;
  box-shadow: 0 0 0 1px #93bbda;
  color: #000;
}
.rollback {
  height: 3px;
  margin-right: 2px;
  background: #3a8cc0;
}
.sash {
  position: absolute;
  left: 227px;
  top: 403px;
  display: flex;
  align-items: center;
  justify-content: center;
  width: 9px;
  height: 38px;
  background: #f8f8f8;
  border: 1px solid #9a9a9a;
  border-left: 0;
}
.sash i {
  width: 5px;
  height: 5px;
  border-radius: 50%;
  background: #c8c8c8;
  border: 1px solid #aaa;
}

/* graphics area */
.viewport { position: relative; flex: 1; overflow: hidden; }
.model { position: absolute; left: 0; top: 0; width: 980px; height: 681px; }

.mini {
  position: absolute;
  left: 520px;
  top: 246px;
  width: 236px;
  height: 68px;
  box-sizing: border-box;
  padding: 4px 0 0 3px;
  background: #f7f7f7;
  border: 1px solid #a8a8a8;
  box-shadow: 2px 2px 3px rgba(0, 0, 0, 0.35);
}
.mini-row { display: flex; align-items: center; height: 30px; }
.mini-btn {
  display: flex;
  justify-content: center;
  width: 30px;
}
.mini-caret { margin: 0 4px 0 2px; }

.ctx {
  position: absolute;
  left: 520px;
  top: 325px;
  width: 236px;
  box-sizing: border-box;
  background: #f7f7f7;
  border: 1px solid #a8a8a8;
  border-bottom: 0;
  box-shadow: 2px 2px 3px rgba(0, 0, 0, 0.35);
}
.ctx-row {
  position: relative;
  display: grid;
  grid-template-columns: 33px 1fr 20px;
  align-items: center;
  height: 24px;
  white-space: nowrap;
}
.ctx-row .ico { justify-self: center; margin-left: 2px; }
.ctx-row .tri { justify-self: center; }
.ctx-row.tall { height: 26px; }
.ctx-row.inset::before {
  content: "";
  position: absolute;
  left: 32px;
  right: 0;
  top: 0;
  border-top: 1px solid #c8c8c8;
}
.ctx-row.hl {
  z-index: 1;
  background: #f7f7f7;
  border-radius: 2px;
  outline: 3px solid #24383c;
}
.ctx-sep { height: 1px; background: #c8c8c8; }
.ctx-head {
  display: flex;
  align-items: center;
  height: 22px;
  padding-left: 3px;
  font-weight: 700;
  white-space: nowrap;
}

/* view heads-up toolbar */
.viewbar {
  position: absolute;
  left: 895px;
  top: 119px;
  display: flex;
  align-items: center;
  height: 26px;
}
.v-slot {
  display: flex;
  align-items: center;
  justify-content: center;
  width: 26px;
}
.v-slot.on {
  height: 26px;
  box-sizing: border-box;
  background: #b4b4b4;
  border: 1px solid #9a9a9a;
}
.v-caret {
  display: flex;
  justify-content: center;
  width: 12px;
  margin-right: 2px;
}
.v-caret.boxed {
  align-items: center;
  width: 13px;
  height: 26px;
  margin-right: 1px;
  box-sizing: border-box;
  background: #efefef;
  border: 1px solid #a8a8a8;
  border-left: 0;
}
</style>
